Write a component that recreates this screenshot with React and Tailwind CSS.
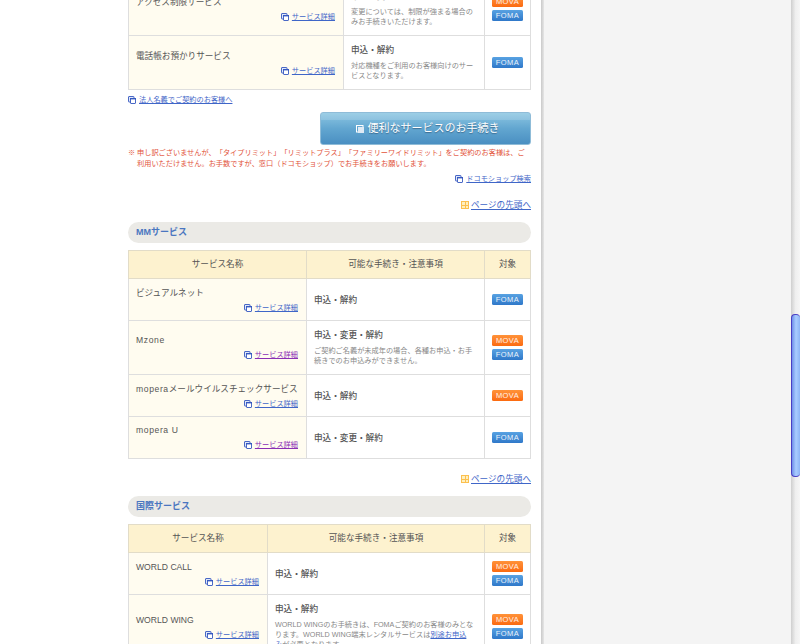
const FONT = "font-['Liberation_Sans','Noto_Sans_CJK_JP',sans-serif] [text-spacing-trim:space-all]";

function WinIcon() {
  return (
    <svg width="8" height="8" viewBox="0 0 8 8" className="inline-block shrink-0 text-[#3558c0]">
      <rect x="0.5" y="0.5" width="5.5" height="5.5" rx="0.5" fill="#dfe8fa" stroke="currentColor" strokeWidth="0.9" />
      <rect x="2.5" y="2.5" width="5" height="5" rx="0.5" fill="#fff" stroke="currentColor" strokeWidth="0.9" />
      <rect x="2" y="2" width="6" height="1.4" fill="currentColor" />
    </svg>
  );
}

function SmallLink({ children, visited }) {
  return (
    <span className="inline-flex items-center gap-[3px] text-[7.2px] leading-[10px] align-top">
      <WinIcon />
      <span className={`underline ${visited ? "text-[#8b2fb5]" : "text-[#3f66c8]"}`}>{children}</span>
    </span>
  );
}

function Badge({ type }) {
  const mova = type === "MOVA";
  return (
    <div
      className={`mx-auto w-[31px] h-[11px] rounded-[1.5px] text-center text-[7.5px] leading-[11px] tracking-[0.4px] text-white/90 font-['Liberation_Sans',sans-serif] ${
        mova ? "bg-gradient-to-b from-[#ff9238] to-[#fb6a0e]" : "bg-gradient-to-b from-[#58a2e2] to-[#2f78c9]"
      }`}
    >
      {type}
    </div>
  );
}

function PageTop() {
  return (
    <div className="flex justify-end items-center gap-[2px] text-[8.6px] leading-[12px]">
      <span className="grid grid-cols-2 gap-[1px] w-[8px] h-[8px] bg-[#fcc04f] p-[1px]">
        <i className="bg-[#fff0bf]" />
        <i className="bg-[#fff0bf]" />
        <i className="bg-[#fff0bf]" />
        <i className="bg-[#fff0bf]" />
      </span>
      <span className="text-[#3f66c8] underline">ページの先頭へ</span>
    </div>
  );
}

function SectionTitle({ children }) {
  return (
    <h2 className="h-[21px] rounded-[11px] bg-[#ebeae6] pl-2 text-[9px] leading-[21px] font-bold text-[#4a76c0]">
      {children}
    </h2>
  );
}

function ServiceTable({ nameWidth, midWidth, header = true, rows }) {
  return (
    <table className="table-fixed border-collapse w-[402px]">
      <colgroup>
        <col style={{ width: nameWidth }} />
        <col style={{ width: midWidth }} />
        <col className="w-[46px]" />
      </colgroup>
      {header && (
        <thead>
          <tr className="h-[28px] bg-[#fdf2cf] text-[8.6px] text-[#555]">
            <th className="border border-[#e2dcc8] font-normal">サービス名称</th>
            <th className="border border-[#e2dcc8] font-normal">可能な手続き・注意事項</th>
            <th className="border border-[#e2dcc8] font-normal">対象</th>
          </tr>
        </thead>
      )}
      <tbody>
        {rows.map((row) => (
          <tr key={row.id} style={{ height: row.h }}>
            <td
              className={`border border-[#dedede] bg-[#fffcf0] pl-[7px] pr-2 align-middle leading-[10px] ${
                row.visited ? "pb-[2px]" : ""
              }`}
            >
              <div className="text-[8.6px] leading-[12px] text-[#555] whitespace-nowrap">{row.name}</div>
              <div className="mt-[4px] text-right leading-[10px]">
                <SmallLink visited={row.visited}>サービス詳細</SmallLink>
              </div>
            </td>
            <td className="border border-[#dedede] pl-[7px] pr-[7px] align-middle">
              <div className="text-[8.6px] leading-[12px] font-medium text-[#555]">{row.action}</div>
              {row.note && (
                <div className="mt-[5px] text-[7.2px] leading-[10px] text-[#888]">{row.note}</div>
              )}
            </td>
            <td className="border border-[#dedede] pb-px align-middle">
              <div className="flex flex-col gap-[3px]">
                {row.targets.map((t) => (
                  <Badge key={t} type={t} />
                ))}
              </div>
            </td>
          </tr>
        ))}
      </tbody>
    </table>
  );
}

const topRows = [
  {
    id: "access",
    name: "アクセス制限サービス",
    h: 54,
    action: "申込・変更・解約",
    note: "変更については、制限が強まる場合のみお手続きいただけます。",
    targets: ["MOVA", "FOMA"],
  },
  {
    id: "phonebook",
    name: "電話帳お預かりサービス",
    h: 54,
    action: "申込・解約",
    note: "対応機種をご利用のお客様向けのサービスとなります。",
    targets: ["FOMA"],
  },
];

const mmRows = [
  { id: "visual", name: "ビジュアルネット", h: 42, action: "申込・解約", targets: ["FOMA"] },
  {
    id: "mzone",
    name: <span className="tracking-[0.6px]">Mzone</span>,
    h: 54,
    visited: true,
    action: "申込・変更・解約",
    note: "ご契約ご名義が未成年の場合、各種お申込・お手続きでのお申込みができません。",
    targets: ["MOVA", "FOMA"],
  },
  {
    id: "mail",
    name: (
      <>
        <span className="tracking-[0.6px]">mopera</span>メールウイルスチェックサービス
      </>
    ),
    h: 42,
    action: "申込・解約",
    targets: ["MOVA"],
  },
  {
    id: "moperau",
    name: <span className="tracking-[0.6px]">mopera U</span>,
    h: 42,
    visited: true,
    action: "申込・変更・解約",
    targets: ["FOMA"],
  },
];

const worldRows = [
  { id: "call", name: "WORLD CALL", h: 42, action: "申込・解約", targets: ["MOVA", "FOMA"] },
  {
    id: "wing",
    name: "WORLD WING",
    h: 64,
    action: "申込・解約",
    note: (
      <>
        WORLD WINGのお手続きは、FOMAご契約のお客様のみとなります。WORLD WING端末レンタルサービスは
        <span className="text-[#3f66c8] underline">
          別途お申込
          <br />み
        </span>
        が必要となります。
      </>
    ),
    targets: ["MOVA", "FOMA"],
  },
];

export default function App() {
  return (
    <div className={`flex h-[644px] w-[800px] overflow-hidden bg-white ${FONT}`}>
      {/* MAIN COLUMN */}
      <div className="w-[541px] shrink-0 pl-[128px] pr-[10px]">
        <div className="-mt-[19px]">
          <ServiceTable nameWidth={215} midWidth={141} header={false} rows={topRows} />
        </div>

        <div className="mt-[5px] leading-[10px]">
          <SmallLink>法人名義でご契約のお客様へ</SmallLink>
        </div>

        <div className="mt-[7px] flex justify-end">
          <div className="relative flex h-[33px] w-[211px] items-center justify-center gap-[4px] overflow-hidden rounded-[3px] border border-[#8fbcd8] bg-gradient-to-b from-[#8cc6e2] via-[#62a6d0] to-[#4a8fc2] pl-[4px] text-[11px] text-white">
            <span className="absolute inset-x-0 top-0 h-[7px] bg-white/15" />
            <svg width="8" height="8" viewBox="0 0 8 8">
              <rect x="0.5" y="0.5" width="6.5" height="6.5" fill="none" stroke="#fff" />
              <rect x="2" y="2" width="6" height="6" fill="#dfeaf4" />
            </svg>
            <span className="[text-shadow:0_1px_1px_rgba(40,70,100,0.6)]">便利なサービスのお手続き</span>
          </div>
        </div>

        <div className="mt-[2px] flex text-[7.2px] leading-[11px] text-[#e2533a]">
          <span className="w-[9px] shrink-0">※</span>
          <p>
            申し訳ございませんが、「タイプリミット」「リミットプラス」「ファミリーワイドリミット」をご契約のお客様は、ご利用いただけません。お手数ですが、窓口（ドコモショップ）でお手続きをお願いします。
          </p>
        </div>

        <div className="mt-[5px] text-right leading-[10px]">
          <SmallLink>ドコモショップ検索</SmallLink>
        </div>

        <div className="mt-[15px]">
          <PageTop />
        </div>

        <div className="mt-[11px]">
          <SectionTitle>MMサービス</SectionTitle>
        </div>
        <div className="mt-[7px]">
          <ServiceTable nameWidth={178} midWidth={178} rows={mmRows} />
        </div>

        <div className="mt-[14px]">
          <PageTop />
        </div>

        <div className="mt-[11px]">
          <SectionTitle>国際サービス</SectionTitle>
        </div>
        <div className="mt-[7px]">
          <ServiceTable nameWidth={139} midWidth={217} rows={worldRows} />
        </div>
      </div>

      {/* EMPTY RIGHT AREA */}
      <div className="w-[3px] shrink-0 bg-gradient-to-r from-[#c9c9c9] to-[#e6e6e6]" />
      <div className="flex-1 bg-[#f4f4f4]" />

      {/* SCROLLBAR */}
      <div className="w-[9px] shrink-0 bg-gradient-to-r from-[#cfcfcf] via-[#efefef] to-[#f6f6f6]">
        <div className="mt-[314px] h-[163px] rounded-[4px] border-l border-y border-[#4a3fc4] bg-gradient-to-r from-[#6f8fe8] via-[#a9ccff] to-[#8db4f5]" />
      </div>
    </div>
  );
}
